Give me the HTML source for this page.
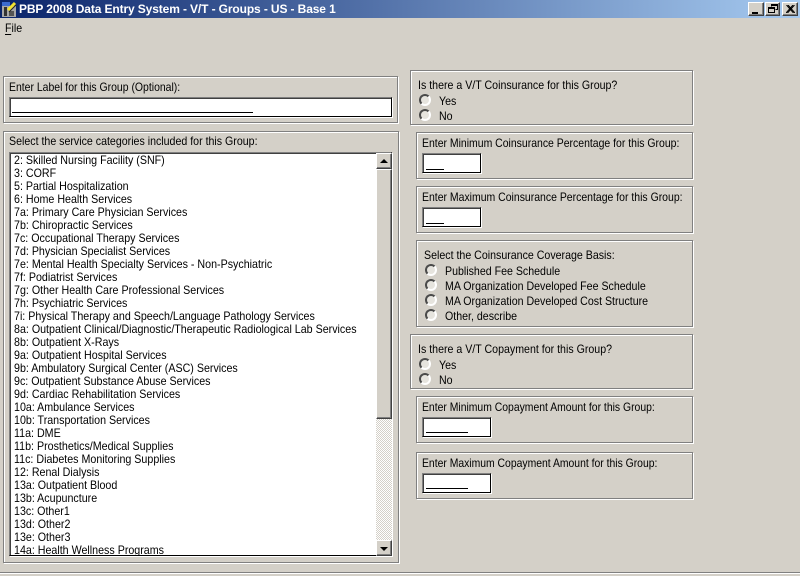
<!DOCTYPE html>
<html><head><meta charset="utf-8"><title>PBP 2008 Data Entry System</title>
<style>
html,body{margin:0;padding:0}
body{width:800px;height:576px;overflow:hidden;background:#d4d0c8;position:relative;font-family:"Liberation Sans",sans-serif;font-size:12px;color:#000}
div,span,svg{position:absolute;box-sizing:border-box}
.t{white-space:nowrap;line-height:14px;height:14px;transform:scaleX(.885);transform-origin:0 0}
.g{border:1px solid #808080;box-shadow:inset 1px 1px 0 #fff,1px 1px 0 #fff}
.i{background:#fff;border-top:1px solid #808080;border-left:1px solid #808080;border-right:1px solid #000;border-bottom:1px solid #000;box-shadow:inset 1px 1px 0 #404040,1px 1px 0 #fff}
.u{height:1px;background:#000}
.b{background:#d4d0c8;border-top:1px solid #fff;border-left:1px solid #fff;border-right:1px solid #404040;border-bottom:1px solid #404040;box-shadow:inset -1px -1px 0 #808080}
.r{width:12px;height:12px;border-radius:50%;background:#e6e4de;border:2px solid;border-color:#4a4a4a #fff #fff #4a4a4a}
#l .t{left:14px;transform:scaleX(.89)}
</style></head><body>
<div style="left:0;top:0;width:800px;height:18px;background:linear-gradient(90deg,#0a246a,#a6caf0)"></div>
<svg style="left:1px;top:1px" width="17" height="17" viewBox="0 0 17 17"><rect x="1" y="1" width="8" height="4" fill="#3a6ad0"/><rect x="1" y="5" width="14" height="11" fill="#a8a8a8"/><rect x="3" y="6" width="3" height="9" fill="#333"/><rect x="8" y="10" width="5" height="5" fill="#555"/><path d="M7 9L14 2" stroke="#f2e230" stroke-width="3"/><path d="M8 11L15 4" stroke="#222" stroke-width="1"/></svg>
<div class="t" style="left:19px;top:2px;color:#fff;font-weight:bold;font-size:12px;letter-spacing:-.12px;transform:none">PBP 2008 Data Entry System - V/T - Groups - US - Base 1</div>
<div class="b" style="left:748px;top:2px;width:16px;height:14px"><span style="left:3px;top:9px;width:6px;height:2px;background:#000"></span></div>
<div class="b" style="left:765px;top:2px;width:15px;height:14px"><svg style="left:2px;top:1px" width="10" height="10"><path d="M3.5 2.5V.5h6v5h-2M3 1.5h6" stroke="#000" fill="none"/><path d="M.5 3.5h6v5h-6zM.5 4.5h6" stroke="#000" fill="none"/></svg></div>
<div class="b" style="left:782px;top:2px;width:16px;height:14px"><svg style="left:3px;top:2px" width="9" height="8"><path d="M.5 0L7.5 8M2 0L9 8M7 0L0 8M8.5 0L1.5 8" stroke="#000" stroke-width="1" fill="none"/></svg></div>
<div class="t" style="left:5px;top:21px">F<span style="left:0;top:13px;width:7px;height:1px;background:#000"></span>ile</div>

<div class="g" style="left:3px;top:76px;width:395px;height:47px"></div>
<div class="t" style="left:9px;top:80px;transform:scaleX(.87)">Enter Label for this Group (Optional):</div>
<div class="i" style="left:9px;top:97px;width:383px;height:20px"></div>
<div class="u" style="left:12px;top:112px;width:241px"></div>

<div class="g" style="left:3px;top:131px;width:396px;height:432px"></div>
<div class="t" style="left:9px;top:134px">Select the service categories included for this Group:</div>
<div class="i" style="left:9px;top:152px;width:383px;height:404px"></div>
<div id="l" style="left:0;top:0;width:376px;height:555px;overflow:hidden">
<div class="t" style="top:153px">2: Skilled Nursing Facility (SNF)</div>
<div class="t" style="top:166px">3: CORF</div>
<div class="t" style="top:179px">5: Partial Hospitalization</div>
<div class="t" style="top:192px">6: Home Health Services</div>
<div class="t" style="top:205px">7a: Primary Care Physician Services</div>
<div class="t" style="top:218px">7b: Chiropractic Services</div>
<div class="t" style="top:231px">7c: Occupational Therapy Services</div>
<div class="t" style="top:244px">7d: Physician Specialist Services</div>
<div class="t" style="top:257px">7e: Mental Health Specialty Services - Non-Psychiatric</div>
<div class="t" style="top:270px">7f: Podiatrist Services</div>
<div class="t" style="top:283px">7g: Other Health Care Professional Services</div>
<div class="t" style="top:296px">7h: Psychiatric Services</div>
<div class="t" style="top:309px">7i: Physical Therapy and Speech/Language Pathology Services</div>
<div class="t" style="top:322px">8a: Outpatient Clinical/Diagnostic/Therapeutic Radiological Lab Services</div>
<div class="t" style="top:335px">8b: Outpatient X-Rays</div>
<div class="t" style="top:348px">9a: Outpatient Hospital Services</div>
<div class="t" style="top:361px">9b: Ambulatory Surgical Center (ASC) Services</div>
<div class="t" style="top:374px">9c: Outpatient Substance Abuse Services</div>
<div class="t" style="top:387px">9d: Cardiac Rehabilitation Services</div>
<div class="t" style="top:400px">10a: Ambulance Services</div>
<div class="t" style="top:413px">10b: Transportation Services</div>
<div class="t" style="top:426px">11a: DME</div>
<div class="t" style="top:439px">11b: Prosthetics/Medical Supplies</div>
<div class="t" style="top:452px">11c: Diabetes Monitoring Supplies</div>
<div class="t" style="top:465px">12: Renal Dialysis</div>
<div class="t" style="top:478px">13a: Outpatient Blood</div>
<div class="t" style="top:491px">13b: Acupuncture</div>
<div class="t" style="top:504px">13c: Other1</div>
<div class="t" style="top:517px">13d: Other2</div>
<div class="t" style="top:530px">13e: Other3</div>
<div class="t" style="top:543px">14a: Health Wellness Programs</div>
</div>
<div style="left:376px;top:153px;width:16px;height:403px;background-color:#eceae5;background-image:repeating-conic-gradient(#d4d0c8 0 25%,#fff 0 50%);background-size:2px 2px"></div>
<div class="b" style="left:376px;top:153px;width:16px;height:16px"><span style="left:3px;top:5px;width:0;height:0;border:4px solid transparent;border-bottom-color:#000;border-top:0"></span></div>
<div class="b" style="left:376px;top:169px;width:16px;height:250px"></div>
<div class="b" style="left:376px;top:540px;width:16px;height:16px"><span style="left:3px;top:6px;width:0;height:0;border:4px solid transparent;border-top-color:#000;border-bottom:0"></span></div>

<div class="g" style="left:410px;top:70px;width:283px;height:55px"></div>
<div class="t" style="left:418px;top:78px">Is there a V/T Coinsurance for this Group?</div>
<div class="r" style="left:419px;top:94px"></div><div class="t" style="left:439px;top:94px">Yes</div>
<div class="r" style="left:419px;top:109px"></div><div class="t" style="left:439px;top:109px">No</div>

<div class="g" style="left:416px;top:132px;width:277px;height:47px"></div>
<div class="t" style="left:422px;top:136px;transform:scaleX(.871)">Enter Minimum Coinsurance Percentage for this Group:</div>
<div class="i" style="left:422px;top:153px;width:59px;height:20px"></div><div class="u" style="left:426px;top:169px;width:18px"></div>

<div class="g" style="left:416px;top:186px;width:277px;height:47px"></div>
<div class="t" style="left:422px;top:190px;transform:scaleX(.872)">Enter Maximum Coinsurance Percentage for this Group:</div>
<div class="i" style="left:422px;top:207px;width:59px;height:20px"></div><div class="u" style="left:426px;top:223px;width:18px"></div>

<div class="g" style="left:416px;top:240px;width:277px;height:87px"></div>
<div class="t" style="left:424px;top:248px">Select the Coinsurance Coverage Basis:</div>
<div class="r" style="left:425px;top:264px"></div><div class="t" style="left:445px;top:264px">Published Fee Schedule</div>
<div class="r" style="left:425px;top:279px"></div><div class="t" style="left:445px;top:279px">MA Organization Developed Fee Schedule</div>
<div class="r" style="left:425px;top:294px"></div><div class="t" style="left:445px;top:294px">MA Organization Developed Cost Structure</div>
<div class="r" style="left:425px;top:309px"></div><div class="t" style="left:445px;top:309px">Other, describe</div>

<div class="g" style="left:410px;top:334px;width:283px;height:55px"></div>
<div class="t" style="left:418px;top:342px">Is there a V/T Copayment for this Group?</div>
<div class="r" style="left:419px;top:358px"></div><div class="t" style="left:439px;top:358px">Yes</div>
<div class="r" style="left:419px;top:373px"></div><div class="t" style="left:439px;top:373px">No</div>

<div class="g" style="left:416px;top:396px;width:277px;height:47px"></div>
<div class="t" style="left:422px;top:400px;transform:scaleX(.866)">Enter Minimum Copayment Amount for this Group:</div>
<div class="i" style="left:422px;top:417px;width:69px;height:20px"></div><div class="u" style="left:426px;top:432px;width:42px"></div>

<div class="g" style="left:416px;top:452px;width:277px;height:47px"></div>
<div class="t" style="left:422px;top:456px;transform:scaleX(.865)">Enter Maximum Copayment Amount for this Group:</div>
<div class="i" style="left:422px;top:473px;width:69px;height:20px"></div><div class="u" style="left:426px;top:488px;width:42px"></div>

<div style="left:0;top:572px;width:800px;height:1px;background:#808080"></div>
<div style="left:0;top:573px;width:800px;height:1px;background:#fff"></div>
</body></html>
